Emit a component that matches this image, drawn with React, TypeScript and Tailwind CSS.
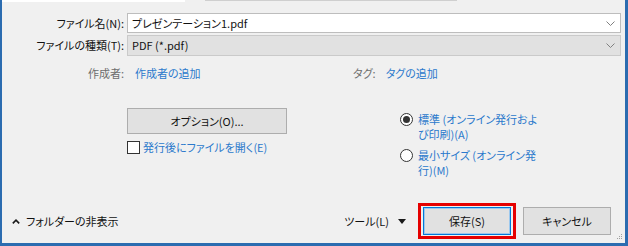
import React from "react";

const font = {
  fontFamily: '"Noto Sans CJK JP", "Noto Sans", sans-serif',
};

function Chevron() {
  return (
    <svg width="9" height="5" viewBox="0 0 9 5" className="text-[#808080]">
      <path d="M0.5 0.5 L4.5 4.5 L8.5 0.5" fill="none" stroke="currentColor" strokeWidth="1" />
    </svg>
  );
}

function Radio({ checked }: { checked?: boolean }) {
  return (
    <span className="flex h-[13px] w-[13px] shrink-0 items-center justify-center rounded-full border border-[#333333] bg-white">
      {checked && <span className="h-[7px] w-[7px] rounded-full bg-[#333333]" />}
    </span>
  );
}

export default function App() {
  return (
    <div
      className="relative flex h-[246px] w-[628px] flex-col overflow-hidden border-b-[3px] border-l-2 border-r-[3px] border-[#2b6cb0] bg-[#f0f0f0] text-[11px] text-[#111111] [font-feature-settings:'palt']"
      style={font}
    >
      {/* remnants of the area above */}
      <div className="flex h-[3px] shrink-0">
        <div className="h-[2px] w-[183px] bg-white" />
        <div className="ml-[20px] h-[1px] w-[252px] bg-[#cfcfcf]" />
      </div>

      {/* file name / type */}
      <div className="mt-[10px] grid grid-cols-[122px_1fr] gap-x-[3px] gap-y-[2px] pr-[4px]">
        <div className="flex items-center justify-end leading-none">ファイル名(N):</div>
        <div className="flex h-[20px] items-center justify-between border border-[#bdbdbd] bg-white pl-[4px] pr-[5px] leading-none">
          <span>プレゼンテーション1.pdf</span>
          <Chevron />
        </div>
        <div className="flex items-center justify-end leading-none">ファイルの種類(T):</div>
        <div className="flex h-[21px] items-center justify-between border border-[#cacaca] bg-[#e1e1e1] pl-[4px] pr-[5px] leading-none">
          <span>PDF (*.pdf)</span>
          <Chevron />
        </div>
      </div>

      {/* author / tags */}
      <div className="mt-[9px] flex h-[16px] items-center leading-none">
        <div className="w-[122px] text-right text-[#6d6d6d]">作成者:</div>
        <div className="ml-[11px] w-[218px] text-[#2b79cc]">作成者の追加</div>
        <div className="text-[#6d6d6d]">タグ:</div>
        <div className="ml-[10px] text-[#2b79cc]">タグの追加</div>
      </div>

      {/* options */}
      <div className="mt-[27px] flex">
        <div className="ml-[125px] flex w-[160px] flex-col">
          <button className="flex h-[26px] w-[160px] items-center justify-center border border-[#adadad] bg-[#e1e1e1] leading-none">
            オプション(O)...
          </button>
          <label className="mt-[7px] flex items-center leading-none">
            <span className="h-[13px] w-[13px] shrink-0 border border-[#333333] bg-white" />
            <span className="ml-[3px] text-[#2b79cc]">発行後にファイルを開く(E)</span>
          </label>
        </div>
        <div className="ml-[113px] flex flex-col gap-[6px] pt-[4px] text-[#2b79cc]">
          <div className="flex items-start">
            <span className="mt-[1px]"><Radio checked /></span>
            <span className="ml-[5px] leading-[15px]">
              標準 (オンライン発行およ
              <br />
              び印刷)(A)
            </span>
          </div>
          <div className="flex items-start">
            <span className="mt-[1px]"><Radio /></span>
            <span className="ml-[5px] leading-[15px]">
              最小サイズ (オンライン発
              <br />
              行)(M)
            </span>
          </div>
        </div>
      </div>

      {/* bottom bar */}
      <div className="mb-[4px] mt-auto flex items-center pr-[14px]">
        <div className="ml-[10px] flex items-center leading-none">
          <svg width="8" height="5" viewBox="0 0 8 5">
            <path d="M0.8 4.4 L4 1.2 L7.2 4.4" fill="none" stroke="#1a1a1a" strokeWidth="1.6" />
          </svg>
          <span className="ml-[6px]">フォルダーの非表示</span>
        </div>
        <div className="ml-auto flex items-center leading-none">
          <span>ツール(L)</span>
          <svg className="ml-[9px]" width="8" height="5" viewBox="0 0 8 5">
            <path d="M0 0 L8 0 L4 5 Z" fill="#1a1a1a" />
          </svg>
        </div>
        <div className="ml-[12px] border-[3px] border-[#e50000] px-[2px] py-[1px]">
          <button className="flex h-[28px] w-[88px] items-center justify-center border border-[#0078d7] bg-[#e1e1e1] leading-none shadow-[inset_0_0_0_1px_#9cc8ee]">
            保存(S)
          </button>
        </div>
        <button className="ml-[7px] flex h-[28px] w-[88px] items-center justify-center border border-[#adadad] bg-[#e1e1e1] leading-none">
          キャンセル
        </button>
      </div>

      {/* resize grip */}
      <div className="absolute bottom-[4px] right-[3px] grid grid-cols-3 gap-[1px]">
        <span />
        <span />
        <span className="h-[1px] w-[1px] bg-[#a0a0a0]" />
        <span />
        <span className="h-[1px] w-[1px] bg-[#a0a0a0]" />
        <span className="h-[1px] w-[1px] bg-[#a0a0a0]" />
        <span className="h-[1px] w-[1px] bg-[#a0a0a0]" />
        <span className="h-[1px] w-[1px] bg-[#a0a0a0]" />
        <span className="h-[1px] w-[1px] bg-[#a0a0a0]" />
      </div>
    </div>
  );
}
